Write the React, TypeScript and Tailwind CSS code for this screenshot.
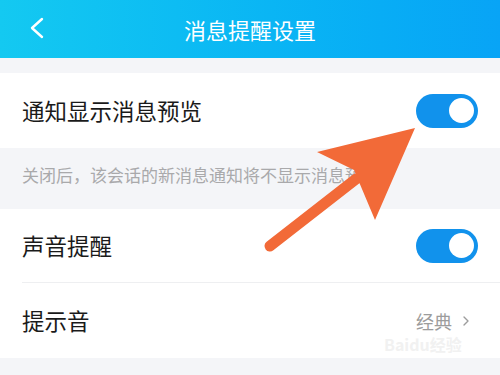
import { ChevronRight } from 'lucide-react'

const font = { fontFamily: '"Noto Sans CJK SC", "Noto Sans", sans-serif' }

function Toggle() {
  return (
    <div className="w-[62px] h-[34px] rounded-full bg-[#1192ec] flex items-center justify-end pr-[4px]">
      <div className="w-[25px] h-[25px] rounded-full bg-white" />
    </div>
  )
}

export default function App() {
  return (
    <div
      className="relative w-[500px] h-[375px] overflow-hidden bg-[#f4f5f8] text-[#1a1a1a]"
      style={font}
    >
      <header className="relative h-[58px] flex items-center justify-center bg-gradient-to-r from-[#14c9f1] to-[#08a4f6]">
        <svg className="absolute left-[28px] top-[17px]" width="18" height="22" viewBox="0 0 18 22">
          <polyline points="14,2 4,11 14,20" fill="none" stroke="white" strokeWidth="2.4" strokeLinecap="round" strokeLinejoin="round" />
        </svg>
        <h1 className="text-white text-[22px] leading-none">消息提醒设置</h1>
      </header>

      <div className="h-[15px]" />

      <div className="bg-white h-[75px] flex items-center justify-between pl-[22px] pr-[22px]">
        <span className="text-[22.5px] leading-none">通知显示消息预览</span>
        <Toggle />
      </div>

      <div className="h-[61px] flex items-center pl-[22px] pb-[8px]">
        <span className="text-[17px] text-[#a9a9ab]">关闭后，该会话的新消息通知将不显示消息预览</span>
      </div>

      <div className="bg-white">
        <div className="h-[73px] flex items-center justify-between pl-[22px] pr-[22px]">
          <span className="text-[22.5px] leading-none">声音提醒</span>
          <Toggle />
        </div>
        <div className="ml-[22px] h-px bg-[#eeeff1]" />
        <div className="h-[75px] flex items-center justify-between pl-[22px] pr-[26px]">
          <span className="text-[22.5px] leading-none">提示音</span>
          <div className="flex items-center gap-[6px] text-[#9c9c9c]">
            <span className="text-[18px] leading-none">经典</span>
            <ChevronRight className="w-[16px] h-[16px]" strokeWidth={2} />
          </div>
        </div>
      </div>

      <div className="absolute left-[384px] top-[336px] text-[16px] font-bold text-[#f1f1f1] leading-none">
        Baidu经验
      </div>

      <svg className="absolute inset-0" width="500" height="375" viewBox="0 0 500 375">
        <line x1="270" y1="246" x2="356" y2="179" stroke="#f26a38" strokeWidth="11" strokeLinecap="round" />
        <polygon points="415,128 317,152 354,170 375,220" fill="#f26a38" />
      </svg>
    </div>
  )
}
